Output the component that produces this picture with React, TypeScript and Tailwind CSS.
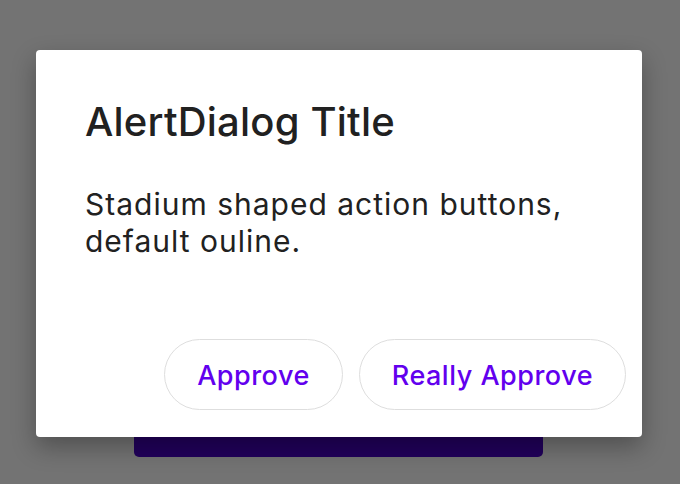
export default function App() {
  return (
    <div
      className="relative w-[680px] h-[484px] overflow-hidden bg-[#737373]"
      style={{ fontFamily: 'Inter, "Noto Sans", sans-serif' }}
    >
      {/* page content behind the barrier */}
      <div className="flex justify-start pl-[134px] pt-[401px]">
        <button className="w-[409px] h-[56px] rounded-[5px] bg-[#21005b]" />
      </div>

      {/* dialog */}
      <div className="absolute left-[36px] top-[50px] w-[606px] h-[387px] flex flex-col rounded-[4px] bg-white shadow-[0_10px_24px_rgba(0,0,0,0.3)]">
        <h2 className="pl-[49px] pr-[40px] pt-[48px] text-[40px] leading-[48px] tracking-[0.2px] font-medium text-[#212121]">
          AlertDialog Title
        </h2>
        <p className="pl-[49px] pr-[30px] pt-[40px] text-[30px] leading-[37px] tracking-[1px] text-[#212121]">
          Stadium shaped action buttons,
          <br />
          default ouline.
        </p>
        <div className="mt-auto flex justify-end gap-[16px] pr-[16px] pb-[27px]">
          <button className="h-[71px] px-[32px] pt-[3px] rounded-full border border-[#dedede] bg-white text-[27px] tracking-[0.5px] font-medium text-[#6200ee]">
            Approve
          </button>
          <button className="h-[71px] px-[32px] pt-[3px] rounded-full border border-[#dedede] bg-white text-[27px] tracking-[0.5px] font-medium text-[#6200ee]">
            Really Approve
          </button>
        </div>
      </div>
    </div>
  );
}
